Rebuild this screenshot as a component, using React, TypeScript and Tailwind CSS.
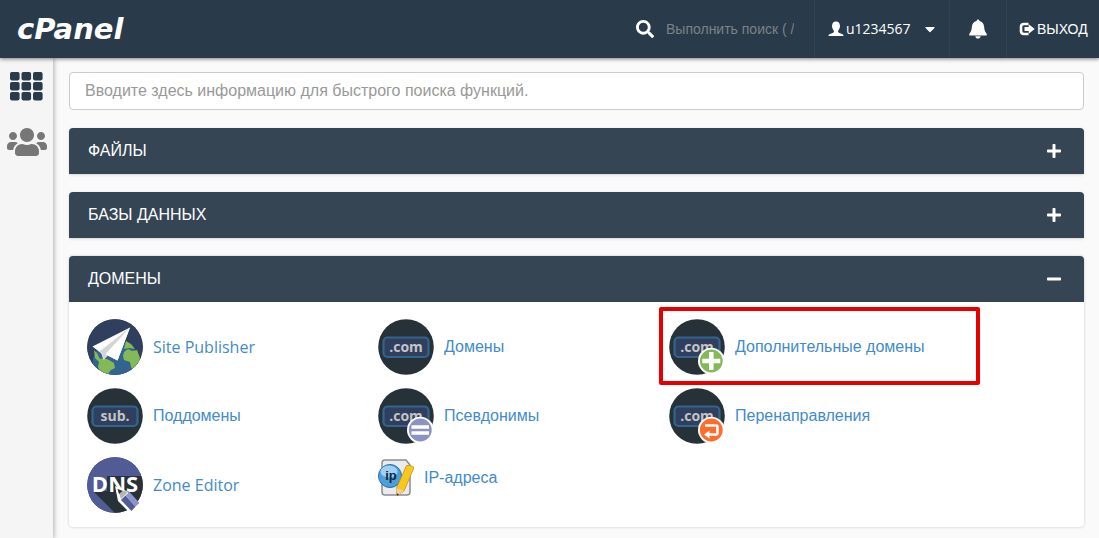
import type { ReactNode } from "react";
import { FaSearch, FaUsers, FaPlus, FaMinus, FaCaretDown } from "react-icons/fa";

const Disc = ({ children }: { children?: ReactNode }) => (
  <svg viewBox="0 0 56 56" className="h-14 w-14 shrink-0" aria-hidden="true">
    <circle cx="28" cy="28" r="27.8" fill="#263238" />
    {children}
  </svg>
);

const AddressPlate = ({ label }: { label: string }) => (
  <>
    <rect x="5.5" y="18.5" width="45" height="19.5" rx="4" fill="#303f5e" stroke="#32648f" strokeWidth="2.2" />
    <text
      x="28"
      y="32.5"
      textAnchor="middle"
      fill="#c4c4c4"
      className="font-['Open_Sans',sans-serif] text-[14px] font-bold"
    >
      {label}
    </text>
  </>
);

const Badge = ({ color, children }: { color: string; children: ReactNode }) => (
  <>
    <circle cx="42.3" cy="42" r="13.3" fill="#fff" />
    <circle cx="42.3" cy="42" r="11.4" fill={color} />
    {children}
  </>
);

const PublisherIcon = () => (
  <Disc>
    <clipPath id="publisher-disc">
      <circle cx="28" cy="28" r="27.8" />
    </clipPath>
    <g clipPath="url(#publisher-disc)">
      <rect width="56" height="56" fill="#303f5e" />
      <circle cx="29" cy="45" r="23.5" fill="#32648f" />
      <path d="M7 31l3 3 3 6 4-1 5 2 5 3 1 5-4 2-3 4-7-1-3-6 1-5-4-4z" fill="#84b957" />
      <path d="M39 22l5 3 4 5-6-1-5 1z" fill="#84b957" />
      <path d="M37 33l4-3 4 2 5-1 3 8-2 9-5 4-2-4-1-5-6-2-1-4z" fill="#84b957" />
      <path d="M43 8.500L5.500 27.500l9 7 2 6 4-4 10 5z" fill="#fff" />
      <path d="M43 8.500L12.500 32.500l2 2.500 2 6 4-4-2-2z" fill="#d4d4d4" />
      <path d="M43 8.500L19.500 35.500l11 6z" fill="#fff" />
    </g>
  </Disc>
);

const DnsIcon = () => (
  <Disc>
    <clipPath id="dns-disc">
      <circle cx="28" cy="28" r="27.8" />
    </clipPath>
    <g clipPath="url(#dns-disc)">
      <rect width="56" height="56" fill="#515b95" />
      <path d="M6 34L28 56h30V19H20v15z" fill="#263238" />
    </g>
    <text
      x="28"
      y="34.5"
      textAnchor="middle"
      fill="#fff"
      className="font-['Open_Sans',sans-serif] text-[22px] font-bold"
    >
      DNS
    </text>
    <path d="M28 29l3 15 13 13 9.500-9.500-13-13z" fill="#fff" />
    <path d="M30.500 32l3.500 10 7-7z" fill="#b5b5b5" />
    <path d="M30.500 32l1.500 5 3.500-3z" fill="#263238" />
    <path d="M34 43l4.500-4.500 10 11-4 4.500z" fill="#515b95" />
    <path d="M38.500 38.500l4-3.500 10 11-4 3.500z" fill="#8c95c8" />
  </Disc>
);

const IpIcon = () => (
  <svg viewBox="0 0 36 38" className="h-[38px] w-9 shrink-0" aria-hidden="true">
    <path d="M7 1h21l4 5v27q0 3-3 3H7q-3 0-3-3V4q0-3 3-3z" fill="#e9ebee" stroke="#8a8d90" strokeWidth="1.5" />
    <circle cx="12" cy="17" r="11.500" fill="#4d9fdc" stroke="#2c6da3" />
    <ellipse cx="11" cy="12.500" rx="8.500" ry="6" fill="#9fd0f4" />
    <text x="13" y="21" textAnchor="middle" fill="#10263c" className="font-['Liberation_Sans',sans-serif] text-[13px] font-bold">
      ip
    </text>
    <path d="M28.500 6.500q4-1 7.500 2L26 32l-7 5-.5-8z" fill="#f7c81e" stroke="#c98f10" strokeWidth=".8" />
    <path d="M18.500 29l7.500 3-7 5z" fill="#f0cfa0" />
    <path d="M18.700 34l2.500 1.500-2.200 1.500z" fill="#444" />
  </svg>
);

const UserGlyph = () => (
  <svg viewBox="0 0 16 16" className="h-4 w-4" fill="currentColor" aria-hidden="true">
    <path d="M8 .5c2.700 0 4 2 4 4.500 0 1.800-.8 3.600-1.900 4.700v1.100c0 .5.3.8.8 1l3.600 1.400c.8.4 1 1 1 1.800H.5c0-.8.2-1.400 1-1.800l3.600-1.400c.5-.2.8-.5.8-1V9.700C4.800 8.600 4 6.800 4 5 4 2.500 5.300.5 8 .5z" />
  </svg>
);

const BellGlyph = () => (
  <svg viewBox="0 0 18 20" className="h-5 w-[18px]" fill="currentColor" aria-hidden="true">
    <path d="M9 .5c.9 0 1.400.6 1.400 1.500 2.900.7 4.500 2.900 4.700 5.500.3 3.800.8 5.300 2.600 7.300v1.700H.3v-1.700c1.800-2 2.300-3.500 2.600-7.300.2-2.600 1.800-4.800 4.700-5.500 0-.9.5-1.500 1.400-1.500z" />
    <path d="M6.300 17.200h5.400c-.3 1.500-1.300 2.300-2.700 2.300s-2.400-.8-2.700-2.300z" />
  </svg>
);

const LogoutGlyph = () => (
  <svg viewBox="0 0 16 14" className="h-3.5 w-4" aria-hidden="true">
    <path d="M9.500 2H5Q2 2 2 5v4q0 3 3 3h4.500" fill="none" stroke="currentColor" strokeWidth="2.600" />
    <path d="M5.500 5h4.200V2.300L15.700 7l-6 4.700V9H5.500z" fill="currentColor" />
  </svg>
);

const tools = [
  { name: "Site Publisher", latin: true, icon: <PublisherIcon /> },
  {
    name: "Домены",
    icon: (
      <Disc>
        <AddressPlate label=".com" />
      </Disc>
    ),
  },
  {
    name: "Дополнительные домены",
    highlighted: true,
    icon: (
      <Disc>
        <AddressPlate label=".com" />
        <Badge color="#84b957">
          <path d="M42.300 33v18M33.300 42h18" stroke="#fff" strokeWidth="4.600" />
        </Badge>
      </Disc>
    ),
  },
  {
    name: "Поддомены",
    icon: (
      <Disc>
        <AddressPlate label="sub." />
      </Disc>
    ),
  },
  {
    name: "Псевдонимы",
    icon: (
      <Disc>
        <AddressPlate label=".com" />
        <Badge color="#8c92c3">
          <path d="M33.500 39h17.500M33.500 45h17.500" stroke="#fff" strokeWidth="3.400" />
        </Badge>
      </Disc>
    ),
  },
  {
    name: "Перенаправления",
    icon: (
      <Disc>
        <AddressPlate label=".com" />
        <Badge color="#ff6c2c">
          <path d="M36 37.500h11q1.500 0 1.500 1.500v6q0 1.500-1.500 1.500h-7" fill="none" stroke="#fff" strokeWidth="2.600" />
          <path d="M35 46.500l5.500-4v8z" fill="#fff" />
        </Badge>
      </Disc>
    ),
  },
  { name: "Zone Editor", latin: true, icon: <DnsIcon /> },
  { name: "IP-адреса", small: true, icon: <IpIcon /> },
];

const PanelHeader = ({ title, open }: { title: string; open?: boolean }) => (
  <h2>
    <button
      type="button"
      aria-expanded={!!open}
      className="flex h-[46px] w-full items-center justify-between rounded-t-[4px] bg-[#354554] pr-[22px] pl-[19px] text-base text-white"
    >
      {title}
      {open ? <FaMinus className="h-4 w-4" /> : <FaPlus className="h-4 w-4" />}
    </button>
  </h2>
);

const App = () => {
  return (
    <div className="flex min-h-screen flex-col bg-[#fafafa] font-['Liberation_Sans',sans-serif]">
      <header className="relative z-10 flex h-[58px] items-stretch bg-[#293a4a] text-white shadow-[0_1px_4px_rgba(0,0,0,0.5)]">
        <a
          href="#home"
          className="flex items-center pl-[17px] font-['DejaVu_Sans',sans-serif] text-[29px] leading-none font-bold italic"
        >
          cPanel
        </a>
        <label className="ml-auto flex items-center gap-3 pr-5">
          <FaSearch className="h-[18px] w-[18px]" />
          <input
            type="text"
            aria-label="Выполнить поиск"
            placeholder="Выполнить поиск ( / )"
            className="w-32 bg-transparent text-sm outline-none placeholder:text-[#7c8286]"
          />
        </label>
        <button
          type="button"
          className="flex w-[135px] items-center border-l border-[#314252] pl-[13px] font-['Open_Sans',sans-serif] text-sm font-medium"
        >
          <UserGlyph />
          <span className="ml-0.5">u1234567</span>
          <FaCaretDown className="ml-3 h-4 w-3.5" />
        </button>
        <button
          type="button"
          aria-label="Уведомления"
          className="flex w-[57px] items-center justify-center border-l border-[#314252]"
        >
          <BellGlyph />
        </button>
        <a href="#logout" className="flex w-[93px] items-center gap-0.5 border-l border-[#314252] pl-3 text-sm">
          <LogoutGlyph />
          ВЫХОД
        </a>
      </header>

      <div className="flex flex-1">
        <nav className="flex w-[53px] shrink-0 flex-col items-center gap-[22px] bg-[#f5f5f5] pt-3 shadow-[1px_0_5px_rgba(0,0,0,0.3)]">
          <a href="#tools" aria-label="Главная">
            <svg viewBox="0 0 33 32" className="h-8 w-[33px]" fill="#293a4a" aria-hidden="true">
              {[0, 11.5, 23].map((x) =>
                [2, 12, 22].map((y) => <rect key={`${x}-${y}`} x={x} y={y} width="9.6" height="8.4" rx="1.8" />)
              )}
            </svg>
          </a>
          <a href="#users" aria-label="Пользователи">
            <FaUsers className="h-9 w-10 text-[#777777]" />
          </a>
        </nav>

        <main className="flex min-w-0 flex-1 flex-col gap-[18px] pt-3.5 pr-[15px] pb-3 pl-4">
          <input
            type="text"
            aria-label="Поиск функций"
            placeholder="Вводите здесь информацию для быстрого поиска функций."
            className="h-[38px] w-full rounded-[4px] border border-[#cccccc] bg-white px-[15px] text-base outline-none placeholder:text-[#999999]"
          />
          <section className="shadow-sm">
            <PanelHeader title="ФАЙЛЫ" />
          </section>
          <section className="shadow-sm">
            <PanelHeader title="БАЗЫ ДАННЫХ" />
          </section>
          <section className="rounded-[4px] bg-white shadow-[0_0_3px_rgba(0,0,0,0.2)]">
            <PanelHeader title="ДОМЕНЫ" open />
            <ul className="grid grid-cols-[repeat(3,minmax(0,291px))] gap-y-[13px] pt-[17px] pr-4 pb-3.5 pl-[18px]">
              {tools.map((tool) => (
                <li key={tool.name} className="relative">
                  <a
                    href="#tool"
                    className={`flex items-center gap-2.5 text-base text-[#428bca] ${tool.small ? "pt-0.5" : ""} ${
                      tool.latin ? "font-['Open_Sans',sans-serif]" : ""
                    }`}
                  >
                    {tool.icon}
                    {tool.name}
                  </a>
                  {tool.highlighted && (
                    <div className="pointer-events-none absolute -top-3 -right-5 -bottom-2.5 -left-2.5 rounded-[2px] border-4 border-[#e60000]" />
                  )}
                </li>
              ))}
            </ul>
          </section>
        </main>
      </div>
    </div>
  );
};

export default App;
